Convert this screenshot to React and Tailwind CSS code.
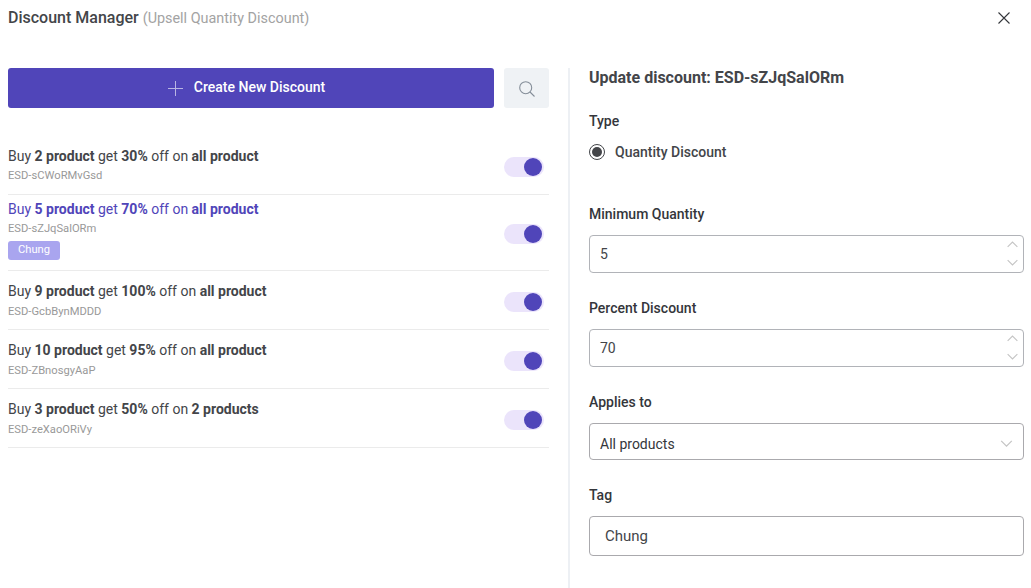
function Chevron({ up, className }) {
  return (
    <svg viewBox="0 0 12 7" className={className} fill="none" stroke="currentColor" strokeWidth="1.2">
      <path d={up ? "M.7 6.2 6 .9 11.3 6.2" : "M.7.8 6 6.1 11.3.8"} />
    </svg>
  );
}

function Toggle() {
  return (
    <button className="mr-[5px] flex h-5 w-10 items-center justify-end rounded-full bg-[#ebe4fb] pr-0.5">
      <span className="size-[18px] rounded-full bg-[#5045b9]" />
    </button>
  );
}

const rows = [
  { qty: "2 product", pct: "30%", on: "all product", code: "ESD-sCWoRMvGsd", space: "pt-2.5", codeSpace: "pt-px" },
  { qty: "5 product", pct: "70%", on: "all product", code: "ESD-sZJqSalORm", space: "pt-1", codeSpace: "pt-px", tag: "Chung", active: true },
  { qty: "9 product", pct: "100%", on: "all product", code: "ESD-GcbBynMDDD", space: "pt-2.5", codeSpace: "pt-0.5" },
  { qty: "10 product", pct: "95%", on: "all product", code: "ESD-ZBnosgyAaP", space: "pt-2.5", codeSpace: "pt-0.5" },
  { qty: "3 product", pct: "50%", on: "2 products", code: "ESD-zeXaoORiVy", space: "pt-2.5", codeSpace: "pt-0.5" },
];

function Row({ r }) {
  return (
    <li className={`flex items-start justify-between border-b border-[#ebebeb] ${r.active ? "h-[76px]" : "h-[59px]"}`}>
      <div className={r.space}>
        <p className={`text-sm leading-5 ${r.active ? "text-[#5045b9]" : "text-[#434549]"}`}>
          Buy <b>{r.qty}</b> get <b>{r.pct}</b> off on <b>{r.on}</b>
        </p>
        <p className={`text-[11.2px] leading-[18px] text-[#999] ${r.codeSpace}`}>{r.code}</p>
        {r.tag && (
          <span className="mt-[3px] flex h-[19px] w-[52px] items-center justify-center rounded-[3px] bg-[#a9a5ef] pb-px text-[11.2px] text-white">
            {r.tag}
          </span>
        )}
      </div>
      <div className={r.active ? "pt-[29px]" : "pt-[21px]"}>
        <Toggle />
      </div>
    </li>
  );
}

function NumberField({ label, value }) {
  return (
    <div className="h-[94px]">
      <h3 className="text-sm leading-5 font-medium">{label}</h3>
      <div className="mt-[11px] flex h-[38px] items-center justify-between rounded border border-[#b1b3b8] pr-[5px] pl-2.5 text-sm text-[#434549]">
        <span>{value}</span>
        <span className="flex flex-col gap-[11px] pb-px text-[#c4c4c4]">
          <Chevron up className="h-[7px] w-[11px]" />
          <Chevron className="h-[7px] w-[11px]" />
        </span>
      </div>
    </div>
  );
}

export default function App() {
  return (
    <div className="h-[588px] w-[1031px] overflow-hidden bg-white pr-[7px] pl-2 font-['Roboto',sans-serif] text-[#34363b]">
      <header className="flex h-[68px] items-start justify-between">
        <h1 className="pt-[6px] text-base leading-6 font-medium text-[#434549]">
          Discount Manager <span className="text-[14.4px] font-normal text-[#a3a3a3]">(Upsell Quantity Discount)</span>
        </h1>
        <svg viewBox="0 0 12 12" className="mt-3 mr-[14px] size-3" fill="none" stroke="#34363b" strokeWidth="1.1">
          <path d="M.5.5 11.5 11.5M11.5.5.5 11.5" />
        </svg>
      </header>
      <main className="flex h-[520px]">
        <section className="w-[541px]">
          <div className="flex h-10 gap-2.5">
            <button className="flex w-[486px] items-center justify-center gap-[11px] rounded-[3px] bg-[#5045b9] pr-[9px] text-sm font-medium text-white">
              <svg viewBox="0 0 15 15" className="size-[15px]" stroke="#b9b5e3"><path d="M7.5 0V15M0 7.5H15" /></svg>
              <span className="pb-0.5">Create New Discount</span>
            </button>
            <button className="flex w-[45px] items-center justify-center rounded-[3px] bg-[#eff2f5] text-[#858e99]">
              <svg viewBox="0 0 16 16" className="mt-0.5 size-4" fill="none" stroke="currentColor" strokeWidth="1.1"><circle cx="6.7" cy="6.7" r="6" /><path d="m11 11 4.5 4.5" /></svg>
            </button>
          </div>
          <ul className="mt-7">
            {rows.map((r) => <Row key={r.code} r={r} />)}
          </ul>
        </section>
        <section className="ml-[19px] w-[456px] border-l-2 border-[#edf0f4] pl-[19px]">
          <h2 className="text-base leading-5 font-bold text-[#434549]">Update discount: ESD-sZJqSalORm</h2>
          <h3 className="mt-[23px] text-sm leading-5 font-medium">Type</h3>
          <label className="mt-[11px] mb-[42px] flex h-5 items-center gap-2.5 text-sm font-medium text-[#434549]">
            <span className="flex size-4 items-center justify-center rounded-full border border-[#434549]"><span className="size-2.5 rounded-full bg-[#434549]" /></span>
            Quantity Discount
          </label>
          <NumberField label="Minimum Quantity" value="5" />
          <NumberField label="Percent Discount" value="70" />
          <h3 className="text-sm leading-5 font-medium">Applies to</h3>
          <div className="mt-[11px] flex h-[37px] items-center justify-between rounded border border-[#aaa9ad] px-2.5 text-sm">
            <span className="pt-[5px]">All products</span> <Chevron className="mt-[3px] h-[7px] w-[13px] text-[#c4c4c4]" />
          </div>
          <h3 className="mt-[25px] text-sm leading-5 font-medium">Tag</h3>
          <div className="mt-[11px] flex h-10 items-center rounded border border-[#aaa9ad] px-[15px] text-[15px] text-[#434549]">Chung</div>
        </section>
      </main>
    </div>
  );
}
